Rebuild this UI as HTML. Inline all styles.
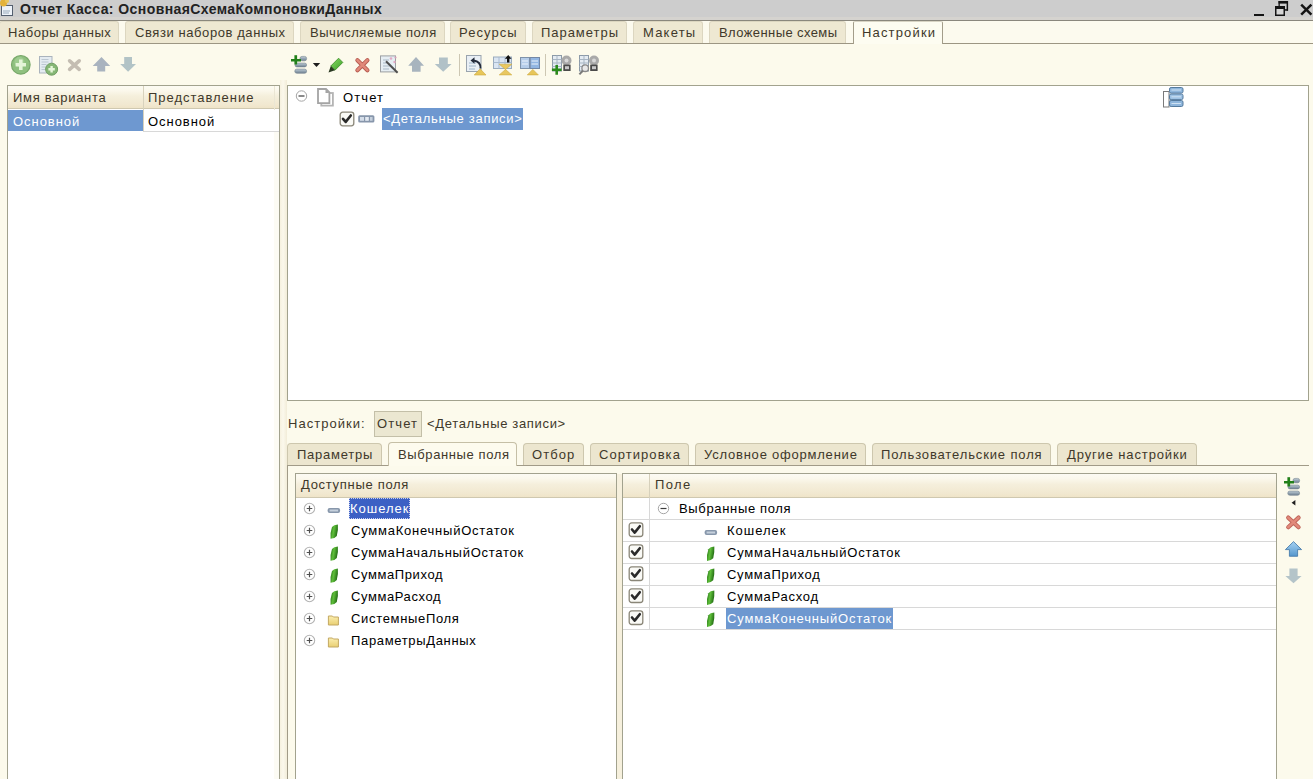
<!DOCTYPE html>
<html><head><meta charset="utf-8">
<style>
*{box-sizing:border-box;margin:0;padding:0}
html,body{width:1313px;height:779px;overflow:hidden;background:#fcfaec;font-family:"Liberation Sans",sans-serif;font-size:13px;color:#000}
.a{position:absolute}
.t{position:absolute;white-space:nowrap;line-height:15px}
.br{color:#40382a}
.w{color:#fff}
.tab{position:absolute;top:21px;height:23px;background:#eee8d2;border:1px solid #dcd6c0;border-bottom:none;border-radius:3px 3px 0 0}
.tab.act{background:#fdfcf1;border-color:#a39d8a;border-top-color:#d8d4c4;z-index:2;height:23px;border-radius:2px 2px 0 0}
.hl{position:absolute;height:1px;background:#a19b88}
.vl{position:absolute;width:1px;background:#a19b88}
.box{position:absolute;background:#fff;border:1px solid #a2a28e}
.hdr{position:absolute;height:23px;background:linear-gradient(#fcfbf3 0,#fbf8ec 20%,#f5efdc 45%,#f1e8d0 85%,#efe4c8 100%);border-bottom:1px solid #cfc8b0}
.sel{position:absolute;background:#6e98d0}
.itab{position:absolute;top:443px;height:22px;background:#ece6cf;border:1px solid #cdc7ae;border-bottom:none;border-radius:4px 4px 0 0}
.itab.act{background:#fdfbee;height:24px;top:442px;z-index:2;border-color:#c5bfa6}
.rl{position:absolute;height:1px;background:#d8d8d8}
.cb{position:absolute;width:15px;height:15px;border:1px solid #8a8678;border-radius:3px;background:linear-gradient(#efeee8,#fff)}
.cb:after{content:"";position:absolute;left:3px;top:1px;width:4px;height:7px;border:solid #222;border-width:0 2.5px 2.5px 0;transform:rotate(40deg)}
svg{position:absolute;left:0;top:0}
</style></head><body>

<!-- title bar -->
<div class="a" style="left:0;top:0;width:1313px;height:17px;background:#cdcdcd"></div>
<div class="a" style="left:0;top:17px;width:1313px;height:3px;background:#d5d3cf"></div>
<div class="a" style="left:0;top:20px;width:1313px;height:1px;background:#8a877d"></div>
<span class="t" style="left:20px;top:2px;font-size:14px;font-weight:bold;color:#222;letter-spacing:0.42px">Отчет Касса: ОсновнаяСхемаКомпоновкиДанных</span>

<!-- top tabs -->
<div class="a" style="left:0;top:21px;width:1313px;height:22px;background:#fcfaee"></div>
<div class="tab" style="left:-1px;width:120px"></div>
<div class="tab" style="left:125px;width:169px"></div>
<div class="tab" style="left:300px;width:145px"></div>
<div class="tab" style="left:450px;width:76px"></div>
<div class="tab" style="left:532px;width:95px"></div>
<div class="tab" style="left:633px;width:70px"></div>
<div class="tab" style="left:709px;width:137px"></div>
<div class="hl" style="left:0;top:43px;width:1313px;background:#9c9683"></div>
<div class="tab act" style="left:853px;width:90px"></div>
<span class="t br" style="left:8px;top:25px;letter-spacing:0.53px">Наборы данных</span>
<span class="t br" style="left:135px;top:25px;letter-spacing:0.58px">Связи наборов данных</span>
<span class="t br" style="left:310px;top:25px;letter-spacing:0.54px">Вычисляемые поля</span>
<span class="t br" style="left:459px;top:25px;letter-spacing:1.07px">Ресурсы</span>
<span class="t br" style="left:541px;top:25px;letter-spacing:0.96px">Параметры</span>
<span class="t br" style="left:643px;top:25px;letter-spacing:1.2px">Макеты</span>
<span class="t br" style="left:719px;top:25px;letter-spacing:0.41px">Вложенные схемы</span>
<span class="t br" style="left:862px;top:25px;letter-spacing:1.16px;z-index:3">Настройки</span>

<!-- left variant table -->
<div class="box" style="left:7px;top:85px;width:273px;height:700px"></div>
<div class="hdr" style="left:8px;top:86px;width:271px"></div>
<div class="vl" style="left:143px;top:86px;height:45px;background:#d8d2bd"></div>
<div class="sel" style="left:8px;top:110px;width:135px;height:21px"></div>
<div class="rl" style="left:143px;top:131px;width:136px"></div>
<span class="t br" style="left:13px;top:90px;letter-spacing:0.72px">Имя варианта</span>
<span class="t br" style="left:148px;top:90px;letter-spacing:0.97px">Представление</span>
<span class="t w" style="left:13px;top:114px;letter-spacing:0.96px">Основной</span>
<span class="t" style="left:148px;top:114px;letter-spacing:0.96px">Основной</span>
<div class="a" style="left:280px;top:80px;width:7px;height:699px;background:linear-gradient(90deg,#f6f1df,#fbf8ec 45%,#f2ecd8)"></div>
<div class="a" style="left:274px;top:132px;width:5px;height:647px;background:#fcfbf4"></div>
<div class="vl" style="left:274px;top:86px;height:24px;background:#ebe6d4"></div>

<!-- tree panel -->
<div class="box" style="left:287px;top:85px;width:1022px;height:316px"></div>
<div class="sel" style="left:382px;top:108px;width:141px;height:22px"></div>
<span class="t" style="left:343px;top:90px;letter-spacing:1.1px">Отчет</span>
<span class="t w" style="left:383px;top:111px;letter-spacing:0.71px">&lt;Детальные записи&gt;</span>

<!-- settings line -->
<span class="t br" style="left:288px;top:416px;letter-spacing:1.02px">Настройки:</span>
<div class="a" style="left:374px;top:411px;width:48px;height:26px;background:#ebe7d1;border:1px solid #c3bfa8"></div>
<span class="t br" style="left:377px;top:416px;letter-spacing:1.1px">Отчет</span>
<span class="t br" style="left:427px;top:416px;letter-spacing:0.67px">&lt;Детальные записи&gt;</span>

<!-- inner tabs -->
<div class="itab" style="left:287px;width:95px"></div>
<div class="itab" style="left:523px;width:61px"></div>
<div class="itab" style="left:590px;width:99px"></div>
<div class="itab" style="left:695px;width:171px"></div>
<div class="itab" style="left:872px;width:179px"></div>
<div class="itab" style="left:1057px;width:140px"></div>
<div class="hl" style="left:287px;top:465px;width:1022px"></div>
<div class="vl" style="left:287px;top:465px;height:314px"></div>
<div class="itab act" style="left:388px;width:129px"></div>
<span class="t br" style="left:297px;top:447px;letter-spacing:0.76px">Параметры</span>
<span class="t br" style="left:398px;top:447px;letter-spacing:0.61px;z-index:3">Выбранные поля</span>
<span class="t br" style="left:532px;top:447px;letter-spacing:1.07px">Отбор</span>
<span class="t br" style="left:599px;top:447px;letter-spacing:1.06px">Сортировка</span>
<span class="t br" style="left:704px;top:447px;letter-spacing:0.78px">Условное оформление</span>
<span class="t br" style="left:881px;top:447px;letter-spacing:0.87px">Пользовательские поля</span>
<span class="t br" style="left:1067px;top:447px;letter-spacing:0.87px">Другие настройки</span>

<!-- available fields -->
<div class="box" style="left:295px;top:473px;width:322px;height:320px"></div>
<div class="hdr" style="left:296px;top:474px;width:320px;height:24px"></div>
<span class="t br" style="left:301px;top:477px;letter-spacing:0.7px">Доступные поля</span>
<div class="sel" style="left:349px;top:498px;width:61px;height:21px;background:#3c60c4;outline:1px dotted #c8d0f0;outline-offset:-1px"></div>
<span class="t w" style="left:350px;top:501px;letter-spacing:1px">Кошелек</span>
<span class="t" style="left:351px;top:523px;letter-spacing:0.77px">СуммаКонечныйОстаток</span>
<span class="t" style="left:351px;top:545px;letter-spacing:0.74px">СуммаНачальныйОстаток</span>
<span class="t" style="left:351px;top:567px;letter-spacing:0.6px">СуммаПриход</span>
<span class="t" style="left:351px;top:589px;letter-spacing:0.58px">СуммаРасход</span>
<span class="t" style="left:351px;top:611px;letter-spacing:0.67px">СистемныеПоля</span>
<span class="t" style="left:351px;top:633px;letter-spacing:0.66px">ПараметрыДанных</span>

<div class="a" style="left:617px;top:474px;width:5px;height:305px;background:#f6f0dd"></div>
<!-- selected fields -->
<div class="box" style="left:622px;top:473px;width:655px;height:320px"></div>
<div class="hdr" style="left:623px;top:474px;width:653px;height:24px"></div>
<div class="vl" style="left:649px;top:474px;height:156px;background:#d6d0bb"></div>
<div class="rl" style="left:623px;top:519px;width:653px"></div>
<div class="rl" style="left:623px;top:541px;width:653px"></div>
<div class="rl" style="left:623px;top:563px;width:653px"></div>
<div class="rl" style="left:623px;top:585px;width:653px"></div>
<div class="rl" style="left:623px;top:607px;width:653px"></div>
<div class="rl" style="left:623px;top:629px;width:653px"></div>
<div class="vl" style="left:649px;top:498px;height:132px;background:#d8d8d8"></div>
<div class="sel" style="left:726px;top:608px;width:167px;height:21px"></div>
<span class="t br" style="left:655px;top:477px;letter-spacing:1.4px">Поле</span>
<span class="t" style="left:679px;top:501px;letter-spacing:0.66px">Выбранные поля</span>
<span class="t" style="left:727px;top:523px;letter-spacing:0.97px">Кошелек</span>
<span class="t" style="left:727px;top:545px;letter-spacing:0.78px">СуммаНачальныйОстаток</span>
<span class="t" style="left:727px;top:567px;letter-spacing:0.72px">СуммаПриход</span>
<span class="t" style="left:727px;top:589px;letter-spacing:0.74px">СуммаРасход</span>
<span class="t w" style="left:727px;top:611px;letter-spacing:0.84px">СуммаКонечныйОстаток</span>


<!-- ICONS -->
<svg width="1313" height="779" viewBox="0 0 1313 779">
<defs>
<linearGradient id="gBar" x1="0" y1="0" x2="0" y2="1"><stop offset="0" stop-color="#c3cfd8"/><stop offset="0.5" stop-color="#93a4b2"/><stop offset="1" stop-color="#6f8090"/></linearGradient>
<linearGradient id="gLeaf" x1="0" y1="0" x2="1" y2="0.3"><stop offset="0" stop-color="#1f6a12"/><stop offset="0.5" stop-color="#5fbf3a"/><stop offset="1" stop-color="#236d14"/></linearGradient>
<linearGradient id="gPen" x1="0" y1="0" x2="1" y2="1"><stop offset="0" stop-color="#8ae066"/><stop offset="1" stop-color="#3c9a28"/></linearGradient>
<radialGradient id="gCirc" cx="0.4" cy="0.35" r="0.7"><stop offset="0" stop-color="#a9d69a"/><stop offset="1" stop-color="#6a9f5a"/></radialGradient>
<linearGradient id="gBlue" x1="0" y1="0" x2="0" y2="1"><stop offset="0" stop-color="#a6d2f2"/><stop offset="1" stop-color="#5596cc"/></linearGradient>
<linearGradient id="gFold" x1="0" y1="0" x2="0" y2="1"><stop offset="0" stop-color="#fbeeb0"/><stop offset="1" stop-color="#e9cf72"/></linearGradient>
<symbol id="addl" viewBox="0 0 17 19" overflow="visible">
  <rect x="9" y="1.4" width="6.6" height="4.4" rx="2" fill="url(#gBar)" stroke="#74838f" stroke-width="0.6"/>
  <rect x="4" y="8.1" width="11.6" height="3.8" rx="1.9" fill="url(#gBar)" stroke="#74838f" stroke-width="0.6"/>
  <rect x="3.8" y="14.1" width="11.8" height="4.2" rx="2" fill="url(#gBar)" stroke="#74838f" stroke-width="0.6"/>
  <rect x="0" y="4" width="10" height="2.5" fill="#22801a"/>
  <rect x="3.4" y="0.2" width="2.7" height="9.3" fill="#22801a"/>
</symbol>
<symbol id="leaf" viewBox="0 0 8 15" overflow="visible">
  <path d="M1.8 2.6 Q3.5 0.4 7.7 0 Q8.2 6 6.6 11.6 Q4.8 14 0.4 14.3 Q-0.2 8 1.8 2.6Z" fill="url(#gLeaf)"/>
</symbol>
<symbol id="pcirc" viewBox="0 0 12 12" overflow="visible">
  <circle cx="6" cy="6" r="5.2" fill="#fff" stroke="#b4b4b4" stroke-width="1.1"/>
  <path d="M3.2 6H8.8M6 3.2V8.8" stroke="#505050" stroke-width="1.2"/>
</symbol>
<symbol id="mcirc" viewBox="0 0 12 12" overflow="visible">
  <circle cx="6" cy="6" r="5.2" fill="#fff" stroke="#a6a6a6" stroke-width="1"/>
  <path d="M3 6H9" stroke="#3c3c3c" stroke-width="1.2"/>
</symbol>
<symbol id="bar" viewBox="0 0 13 5" overflow="visible">
  <rect x="0" y="0" width="12.5" height="5" rx="2" fill="#8797ab"/>
  <rect x="2" y="1.5" width="8.5" height="2" fill="#c5d0dc"/>
</symbol>
<symbol id="fold" viewBox="0 0 11 11" overflow="visible">
  <path d="M0.5 1.5 H4.5 L5.5 2.5 H10.5 V10.5 H0.5 Z" fill="url(#gFold)" stroke="#c3a862" stroke-width="1"/>
</symbol>
<symbol id="cbx" viewBox="0 0 15 15" overflow="visible">
  <rect x="0.7" y="0.7" width="13.6" height="13.6" rx="2.5" fill="#fafaf6" stroke="#8a8678" stroke-width="1.3"/>
  <path d="M3.5 7.3 L6.2 10.4 L11.3 4" fill="none" stroke="#2a2a2a" stroke-width="2.6" stroke-linejoin="round" stroke-linecap="round"/>
</symbol>
</defs>

<!-- title icon -->
<rect x="1.5" y="5.5" width="11" height="10" fill="#eef3f9" stroke="#556070" stroke-width="1"/>
<path d="M3 11h7M3 13h6" stroke="#9ab" stroke-width="1"/>
<circle cx="3.5" cy="3" r="3.5" fill="#e3b23a"/>
<circle cx="7" cy="1" r="2" fill="#eac55a"/>

<!-- window controls -->
<rect x="1254" y="14" width="10" height="2" fill="#141414"/>
<rect x="1278.5" y="1" width="9.5" height="2.6" fill="#141414"/>
<rect x="1286.6" y="1" width="1.5" height="9.7" fill="#141414"/>
<rect x="1278.5" y="1" width="1.3" height="5" fill="#141414"/>
<rect x="1285" y="9.2" width="3" height="1.5" fill="#141414"/>
<rect x="1275" y="6" width="10" height="10" fill="#141414"/>
<rect x="1276.5" y="9" width="7" height="5.5" fill="#d6d6d6"/>
<path d="M1301.2 4.6L1311.4 14.6M1311.4 4.6L1301.2 14.6" stroke="#141414" stroke-width="2.5"/>
<!-- left toolbar -->
<circle cx="20.8" cy="64.8" r="9.3" fill="#8fc07f" stroke="#78a86a" stroke-width="1.2"/>
<circle cx="19.5" cy="62" r="5" fill="#a9d49a" opacity="0.6"/>
<path d="M15.6 64.8H26M20.8 59.6V70" stroke="#e4f4d8" stroke-width="3.6"/>
<rect x="39.5" y="56.5" width="12.5" height="16.5" fill="#e4ebf1" stroke="#aab3bd" stroke-width="1"/>
<path d="M41.5 59.5h7M41.5 62h7M41.5 64.5h5M41.5 67h4M41.5 69.5h4" stroke="#bcc7d2" stroke-width="1"/>
<circle cx="51.6" cy="69.2" r="6" fill="#86b776" stroke="#6f9d62" stroke-width="1"/>
<path d="M48.4 69.2H54.8M51.6 66V72.4" stroke="#e6f5da" stroke-width="2.4"/>
<path d="M69.6 60.8L79.2 69.4M79.2 60.8L69.6 69.4" stroke="#c4bdb2" stroke-width="3.6" stroke-linecap="round"/>
<path d="M101.5 57.1L110.2 66H105.2V71.4H97.2V66H92.7Z" fill="#a9b3bf"/>
<path d="M124.2 57.1H132V64H136L128.1 71.7L120.2 64H124.2Z" fill="#b2c3c6"/>
<!-- right toolbar -->
<use href="#addl" x="291" y="55" width="17" height="19"/>
<path d="M312.8 63H320.2L316.5 67Z" fill="#1e1e1e"/>
<path d="M338.6 58.2L342.8 62.4L335 70.2L330.8 66Z" fill="url(#gPen)" stroke="#3a8a26" stroke-width="0.8"/>
<path d="M330.8 66L335 70.2L328.5 72.4Z" fill="#2b3a23"/>
<path d="M357.4 60.2L367.4 70.2M367.4 60.2L357.4 70.2" stroke="#b85c52" stroke-width="4.2" stroke-linecap="round"/>
<path d="M357.4 60.2L367.4 70.2M367.4 60.2L357.4 70.2" stroke="#e1897a" stroke-width="2.4" stroke-linecap="round"/>
<rect x="380.5" y="55.9" width="15" height="16" fill="#e6eef3" stroke="#9c9fa2" stroke-width="1"/>
<path d="M383 60h6M383 63h4M383 66h7M383 69h6" stroke="#a9b8c6" stroke-width="1"/>
<path d="M386 61.3L397.6 72.8" stroke="#4e4e4e" stroke-width="2"/>
<circle cx="391" cy="58.5" r="1.3" fill="#e2a9c4"/><circle cx="395.5" cy="57.5" r="1.1" fill="#d9a0bb"/><circle cx="394.5" cy="62" r="1.2" fill="#e2a9c4"/>
<path d="M416 57L424 65.8H420.6V71.7H412V65.8H408.2Z" fill="#a8b4be"/>
<path d="M439 57.4H447.8V64.1H451.6L443.2 71.7L434.8 64.1H439Z" fill="#b1c1c7"/>
<rect x="459" y="54" width="1" height="22" fill="#cdc7b3"/>
<rect x="466.5" y="55.5" width="14.5" height="16" fill="#e9eff5" stroke="#9aa4ae" stroke-width="1"/>
<path d="M469 63h7M469 66h7M469 69h6" stroke="#9fb6cb" stroke-width="1"/>
<path d="M480.5 68.5Q481 61.5 473.5 60.5" fill="none" stroke="#222a3a" stroke-width="1.8"/>
<path d="M470.5 60.5L474.5 57.2V63.8Z" fill="#222a3a"/>
<path d="M474.2 75L486 75L480.1 68.8Z" fill="#e7c65a" stroke="#cca83c" stroke-width="0.6"/>
<rect x="493.5" y="57" width="18" height="11.5" fill="#dae5f2" stroke="#9aabbd" stroke-width="1"/>
<path d="M499 57v11.5M505 57v11.5M493.5 62.5h18" stroke="#a9bbd0" stroke-width="1"/>
<path d="M499.2 64.2H511.8L505.5 69.5L511.8 74.9H499.2L505.5 69.5Z" fill="#e9c760" stroke="#cfac42" stroke-width="0.6"/>
<path d="M508.2 55L511.5 58.8H509.4V62.4H507V58.8H504.9Z" fill="#111"/>
<rect x="520.5" y="57.5" width="9" height="11" fill="#b5cde9" stroke="#7f93aa" stroke-width="1"/>
<rect x="530.2" y="57.5" width="9.3" height="11" fill="#92b6e2" stroke="#7388a6" stroke-width="1"/>
<path d="M522 61h6M522 64h6M531.5 61h6.5M531.5 64h6.5" stroke="#eaf2fb" stroke-width="1"/>
<path d="M527.3 74.9H538.3L532.8 69.4Z" fill="#e7c65a" stroke="#cca83c" stroke-width="0.6"/>
<rect x="545" y="54" width="1" height="22" fill="#cdc7b3"/>
<rect x="552.5" y="55.5" width="9" height="15.5" fill="#e4ebf2" stroke="#8c9aa8" stroke-width="1"/>
<path d="M552.5 59.5h9M552.5 63h9M552.5 66.5h9M557 55.5v15.5" stroke="#a7b5c3" stroke-width="1"/>
<circle cx="566.5" cy="60.5" r="5" fill="#a9a9a9"/><circle cx="566.5" cy="60.5" r="2" fill="#d8d8d8"/>
<rect x="563.3" y="64.6" width="7.3" height="6.4" fill="#4a4a4a"/><rect x="565" y="66.2" width="4" height="3" fill="#c8c8c8"/>
<path d="M551.9 69.8H561.5M556.7 65V74.7" stroke="#2b8a1c" stroke-width="2.6"/>
<rect x="579.5" y="55.5" width="9" height="15.5" fill="#e4ebf2" stroke="#8c9aa8" stroke-width="1"/>
<path d="M579.5 59.5h9M579.5 63h9M579.5 66.5h9M584 55.5v15.5" stroke="#a7b5c3" stroke-width="1"/>
<circle cx="594" cy="60.5" r="5" fill="#a9a9a9"/><circle cx="594" cy="60.5" r="2" fill="#d8d8d8"/>
<rect x="590.2" y="64.6" width="7.4" height="6.4" fill="#4a4a4a"/><rect x="592" y="66.2" width="4" height="3" fill="#c8c8c8"/>
<circle cx="585.2" cy="68.2" r="3.3" fill="#e8e8e8" stroke="#8a8a8a" stroke-width="1.3"/>
<path d="M582.8 70.8L579.4 74.4" stroke="#7a7a7a" stroke-width="2"/>

<!-- tree icons -->
<use href="#mcirc" x="295.5" y="90" width="12" height="12"/>
<rect x="321.3" y="93" width="11.6" height="12.6" fill="#fff" stroke="#b4b4b4" stroke-width="1.8"/>
<path d="M318 89H326L329.4 92.4V103.2H318Z" fill="#fff" stroke="#a4a4a4" stroke-width="1.8"/>
<path d="M325.5 89V93H329.4Z" fill="#a4a4a4"/>
<use href="#cbx" x="339.5" y="111.5" width="15" height="15"/>
<rect x="358.2" y="115.3" width="16.2" height="7.3" rx="1.5" fill="#8796ab"/>
<rect x="360" y="117" width="4" height="3.8" fill="#d4dde8"/><rect x="365.2" y="117" width="3.6" height="3.8" fill="#e4eaf2"/><rect x="370" y="117" width="2.6" height="3.8" fill="#c5d0dc"/>
<rect x="1163.5" y="91.5" width="5.5" height="15.5" fill="#fff" stroke="#7a7a7a" stroke-width="1"/>
<rect x="1169.5" y="87.5" width="13.5" height="5.6" rx="1.6" fill="#8fb6dc" stroke="#557b9e" stroke-width="1"/>
<rect x="1169.5" y="94" width="13.5" height="5.6" rx="1.6" fill="#9ec2e4" stroke="#557b9e" stroke-width="1"/>
<rect x="1169.5" y="100.5" width="13.5" height="6" rx="1.6" fill="#8fb6dc" stroke="#557b9e" stroke-width="1"/>
<path d="M1171.5 90h9.5M1171.5 96.8h9.5M1171.5 103.5h9.5" stroke="#cfe2f3" stroke-width="1"/>
<!-- available list icons -->
<use href="#pcirc" x="303.5" y="502.5" width="12" height="12"/>
<use href="#pcirc" x="303.5" y="524.5" width="12" height="12"/>
<use href="#pcirc" x="303.5" y="546.5" width="12" height="12"/>
<use href="#pcirc" x="303.5" y="568.5" width="12" height="12"/>
<use href="#pcirc" x="303.5" y="590.5" width="12" height="12"/>
<use href="#pcirc" x="303.5" y="612.5" width="12" height="12"/>
<use href="#pcirc" x="303.5" y="634.5" width="12" height="12"/>
<use href="#bar" x="327.6" y="508" width="13" height="5"/>
<use href="#leaf" x="330.2" y="524.5" width="8" height="15"/>
<use href="#leaf" x="330.2" y="546.5" width="8" height="15"/>
<use href="#leaf" x="330.2" y="568.5" width="8" height="15"/>
<use href="#leaf" x="330.2" y="590.5" width="8" height="15"/>
<use href="#fold" x="327.9" y="614.5" width="11" height="11"/>
<use href="#fold" x="327.9" y="636.5" width="11" height="11"/>

<!-- selected list icons -->
<use href="#mcirc" x="657.5" y="502.5" width="12" height="12"/>
<use href="#bar" x="704.6" y="530" width="13" height="5"/>
<use href="#leaf" x="706.6" y="546.6" width="8" height="15"/>
<use href="#leaf" x="706.6" y="568.6" width="8" height="15"/>
<use href="#leaf" x="706.6" y="590.6" width="8" height="15"/>
<use href="#leaf" x="706.6" y="612.6" width="8" height="15"/>
<use href="#cbx" x="628.5" y="522.2" width="15" height="15"/>
<use href="#cbx" x="628.5" y="544.2" width="15" height="15"/>
<use href="#cbx" x="628.5" y="566.2" width="15" height="15"/>
<use href="#cbx" x="628.5" y="588.2" width="15" height="15"/>
<use href="#cbx" x="628.5" y="610.2" width="15" height="15"/>

<!-- right side buttons -->
<use href="#addl" x="1284" y="477" width="17" height="19"/>
<path d="M1295.4 500L1295.4 505.4L1291.6 502.7Z" fill="#1e1e1e"/>
<path d="M1288.2 517.6L1298.6 527.2M1298.6 517.6L1288.2 527.2" stroke="#c0655a" stroke-width="4.2" stroke-linecap="round"/>
<path d="M1288.2 517.6L1298.6 527.2M1298.6 517.6L1288.2 527.2" stroke="#e1897a" stroke-width="2.4" stroke-linecap="round"/>
<path d="M1293.5 541.6L1301.6 549.6H1297.6V556.3H1289.4V549.6H1285.4Z" fill="url(#gBlue)" stroke="#3d73a6" stroke-width="0.8"/>
<path d="M1289.4 568.6H1297.6V576H1301.6L1293.5 583.2L1285.4 576H1289.4Z" fill="#b4c4c9"/>
</svg>

</body></html>
